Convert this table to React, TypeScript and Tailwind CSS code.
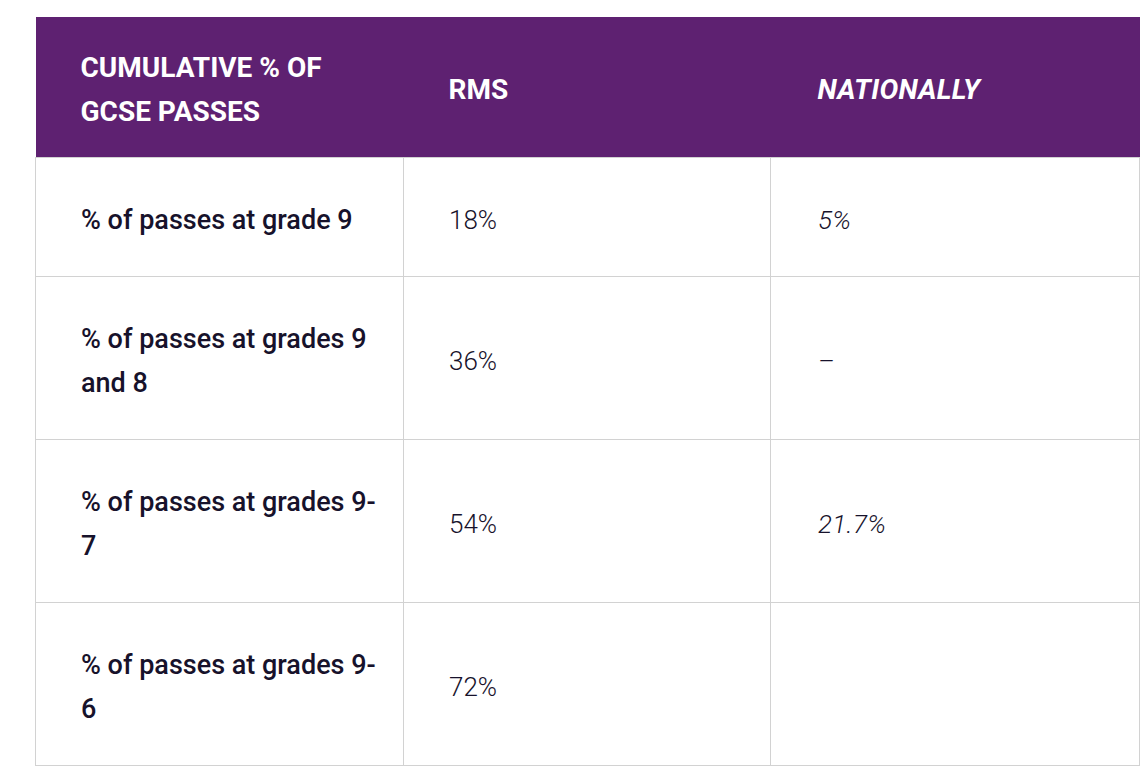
import React from "react";

const rows: { label: React.ReactNode; rms: string; nat: string }[] = [
  { label: "% of passes at grade 9", rms: "18%", nat: "5%" },
  {
    label: (
      <>
        % of passes at grades 9<br />and 8
      </>
    ),
    rms: "36%",
    nat: "–",
  },
  {
    label: (
      <>
        % of passes at grades 9-<br />7
      </>
    ),
    rms: "54%",
    nat: "21.7%",
  },
  {
    label: (
      <>
        % of passes at grades 9-<br />6
      </>
    ),
    rms: "72%",
    nat: "",
  },
];

export default function App() {
  return (
    <div className="min-h-[778px] w-[1142px] bg-white pt-[17px] pl-[35px] font-['Roboto',sans-serif]">
      <table className="w-[1104px] table-fixed border-collapse">
        <colgroup>
          <col className="w-[368px]" />
          <col className="w-[367px]" />
          <col className="w-[369px]" />
        </colgroup>
        <thead>
          <tr className="bg-[#5e2171] text-white">
            <th className="px-[45px] pt-[29px] pb-[23px] text-left align-middle text-[28px] font-bold uppercase leading-[44px] whitespace-nowrap">
              Cumulative % of
              <br />
              GCSE passes
            </th>
            <th className="px-[45px] pt-[29px] pb-[23px] text-left align-middle text-[28px] font-bold uppercase leading-[44px]">
              RMS
            </th>
            <th className="px-[47px] pt-[29px] pb-[23px] text-left align-middle text-[28px] font-bold uppercase italic leading-[44px] tracking-[0.3px]">
              Nationally
            </th>
          </tr>
        </thead>
        <tbody className="text-[#17122b]">
          {rows.map((r, i) => (
            <tr key={i}>
              <td className="border border-[#d2d2d2] px-[45px] pt-[40px] pb-[34px] align-middle text-[27px] font-medium leading-[44px] whitespace-nowrap">
                {r.label}
              </td>
              <td className="border border-[#d2d2d2] px-[45px] pt-[40px] pb-[34px] align-middle text-[26px] font-light leading-[44px]">
                {r.rms}
              </td>
              <td className="border border-[#d2d2d2] px-[47px] pt-[40px] pb-[34px] align-middle text-[26px] font-light italic leading-[44px] tracking-[0.3px]">
                {r.nat}
              </td>
            </tr>
          ))}
        </tbody>
      </table>
    </div>
  );
}
